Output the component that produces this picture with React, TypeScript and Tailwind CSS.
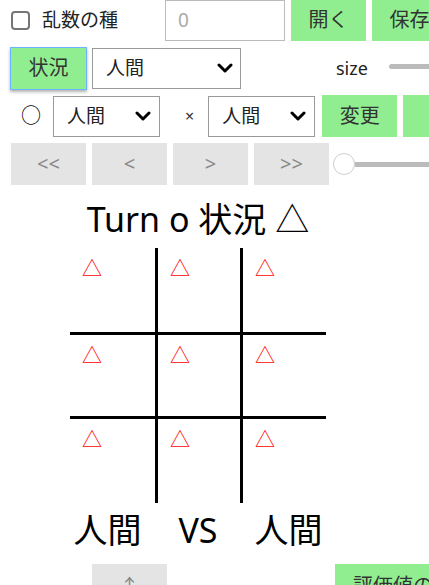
import type { ReactNode } from 'react';

const font = "font-['Noto_Sans','Noto_Sans_CJK_JP',sans-serif]";

function GreenBtn({ children, className = '' }: { children: ReactNode; className?: string }) {
  return (
    <button className={`w-[75px] h-[42px] shrink-0 bg-[#90ee90] text-[#333] text-[20px] leading-none ${className}`}>
      {children}
    </button>
  );
}

function NavBtn({ children, className = '' }: { children: ReactNode; className?: string }) {
  return (
    <button className={`w-[75px] h-[42px] shrink-0 bg-[#e4e4e4] text-[#888] text-[20px] leading-none ${className}`}>
      {children}
    </button>
  );
}

function Chevron() {
  return (
    <svg width="16" height="10" viewBox="0 0 16 10" className="shrink-0">
      <polyline points="2,2 8,8 14,2" fill="none" stroke="#000" strokeWidth="3" strokeLinecap="round" strokeLinejoin="round" />
    </svg>
  );
}

function Select({ w, className = '' }: { w: string; className?: string }) {
  return (
    <div className={`${w} h-[41px] shrink-0 border border-[#999] bg-white flex items-center justify-between pl-[13px] pr-[7px] text-[19px] text-[#222] ${className}`}>
      <span>人間</span>
      <Chevron />
    </div>
  );
}

const cells = [0, 1, 2, 3, 4, 5, 6, 7, 8];

export default function App() {
  return (
    <div className={`w-[429px] h-[585px] overflow-hidden bg-white text-black ${font}`}>
      <div className="mt-[-4px]">
        {/* row 1 */}
        <div className="h-[48px] flex items-center">
          <span className="ml-[11px] w-[19px] h-[19px] rounded-[4px] border-2 border-[#767676] shrink-0" />
          <span className="ml-[12px] text-[19px] text-[#222] whitespace-nowrap">乱数の種</span>
          <input
            placeholder="0"
            className="ml-[47px] w-[120px] h-[41px] shrink-0 border border-[#bbb] pl-[12px] text-[19px] outline-none placeholder:text-[#aaa]"
          />
          <GreenBtn className="ml-[6px]">開く</GreenBtn>
          <GreenBtn className="ml-[6px]">保存</GreenBtn>
        </div>

        {/* row 2 */}
        <div className="h-[48px] flex items-center">
          <button className="ml-[10px] w-[77px] h-[43px] shrink-0 bg-[#90ee90] text-[#333] text-[20px] leading-none border border-[#6cb4ff] shadow-[0_2px_3px_rgba(0,0,0,0.3)]">
            状況
          </button>
          <Select w="w-[149px]" className="ml-[5px]" />
          <span className="ml-[95px] text-[18px] text-[#222]">size</span>
          <div className="ml-[21px] w-[60px] h-[5px] rounded-full bg-[#bbb] shrink-0 -mt-[4px]" />
        </div>

        {/* row 3 */}
        <div className="h-[48px] flex items-center">
          <span className="ml-[21px] text-[20px] leading-none">○</span>
          <Select w="w-[107px]" className="ml-[12px] pr-[8px]" />
          <span className="ml-[25px] text-[16px] text-[#333]">×</span>
          <Select w="w-[107px]" className="ml-[14px] pr-[8px]" />
          <GreenBtn className="ml-[7px]">変更</GreenBtn>
          <GreenBtn className="ml-[6px] w-[100px] text-left pl-[24px] whitespace-nowrap">リセット</GreenBtn>
        </div>

        {/* row 4 */}
        <div className="h-[48px] flex items-center">
          <NavBtn className="ml-[11px]">&lt;&lt;</NavBtn>
          <NavBtn className="ml-[6px]">&lt;</NavBtn>
          <NavBtn className="ml-[6px]">&gt;</NavBtn>
          <NavBtn className="ml-[6px]">&gt;&gt;</NavBtn>
          <div className="ml-[4px] flex items-center shrink-0">
            <span className="w-[22px] h-[22px] rounded-full border border-[#ccc] bg-white shrink-0" />
            <span className="w-[80px] h-[5px] bg-[#bbb] shrink-0" />
          </div>
        </div>
      </div>

      {/* board */}
      <div className="w-[396px] flex flex-col items-center">
        <h1 className="mt-[11px] text-[34px] leading-[40px] whitespace-nowrap">Turn o 状況 △</h1>
        <div className="mt-[9px] grid grid-cols-[88px_85px_83px] grid-rows-[87px_84px_84px]">
          {cells.map((i) => (
            <div
              key={i}
              className={`pl-[12px] pt-[8px] text-[20px] leading-[26px] text-[#f00] ${i % 3 < 2 ? 'border-r-[3px] border-black' : ''} ${i < 6 ? 'border-b-[3px] border-black' : ''}`}
            >
              △
            </div>
          ))}
        </div>
        <div className="mt-[7px] flex justify-center gap-[37px] text-[34px] leading-[40px]">
          <span>人間</span>
          <span>VS</span>
          <span>人間</span>
        </div>
      </div>

      {/* bottom row */}
      <div className="mt-[14px] flex items-start">
        <NavBtn className="ml-[92px] text-[13px] pt-[13px] flex justify-center items-start">↑</NavBtn>
        <GreenBtn className="ml-[168px] w-[120px] flex items-start pt-[12px] pl-[18px] whitespace-nowrap">評価値の表示</GreenBtn>
      </div>
    </div>
  );
}
